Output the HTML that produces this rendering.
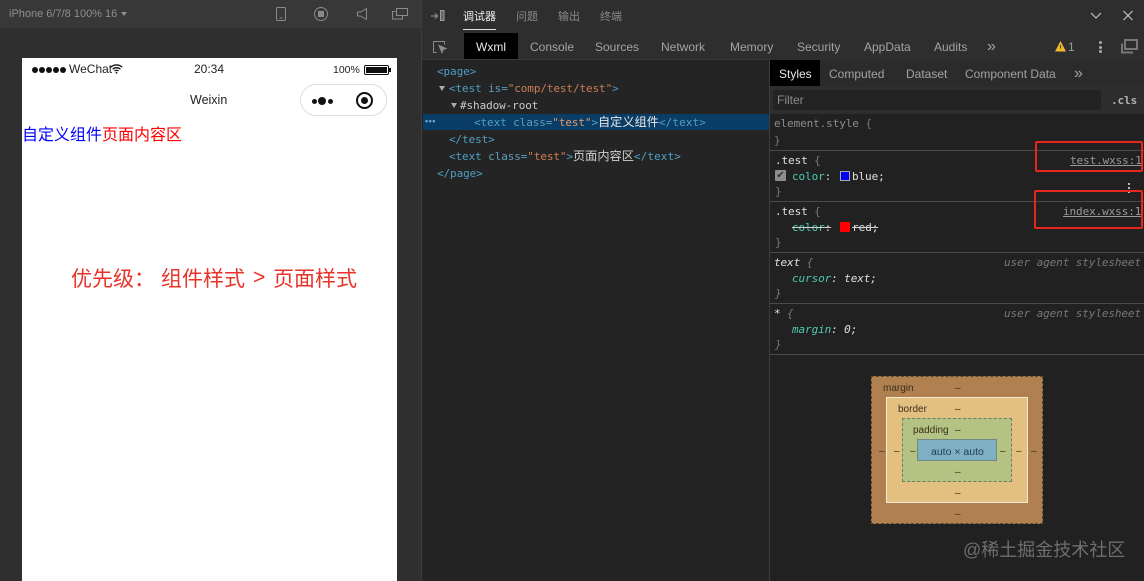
<!DOCTYPE html>
<html>
<head>
<meta charset="utf-8">
<style>
html,body{margin:0;padding:0;background:#212121}
#r{position:relative;width:1144px;height:581px;overflow:hidden;background:#212121;font-family:"Liberation Sans","Noto Sans CJK SC",sans-serif}
.a{position:absolute}
.t{position:absolute;white-space:pre;line-height:16px;font-size:12px;color:#a3a3a3}
.m{position:absolute;margin-top:1px;white-space:pre;line-height:16px;font-size:11px;letter-spacing:-.1px;font-family:"DejaVu Sans Mono","Liberation Mono","Noto Sans CJK SC",monospace;color:#d4d4d4}
.cj{font-family:"Noto Sans CJK SC",sans-serif;letter-spacing:0;font-size:12px}
.m .cj{font-size:12.2px}
.e{letter-spacing:.1px}
.b{color:#4f9fc4}.g{color:#5f9dbd}.o{color:#ce7d55}.ln{background:#4a4a4a;height:1px;left:770px;width:374px}
.c{color:#4ec9b0}.d{color:#777}
svg{position:absolute;overflow:visible}
.bx{position:absolute;margin-top:1px;font-size:10px;line-height:10px;color:#3b2f1c;white-space:pre}
.r{position:absolute;top:264px;font-size:21px;line-height:28px;white-space:pre;font-family:'Noto Sans CJK SC',sans-serif;color:#e8332a}
</style>
</head>
<body>
<div id="r">
<!-- left simulator -->
<div class="a" style="left:0;top:0;width:421px;height:581px;background:#2f2f2f"></div>
<div class="a" style="left:0;top:0;width:421px;height:28px;background:#383838"></div>
<div class="t" style="left:9px;top:6px;font-size:11px;color:#8f8f8f">iPhone 6/7/8 100% 16</div>
<div class="a" style="left:121px;top:12px;border:3px solid transparent;border-top:4px solid #8f8f8f"></div>
<svg style="left:270px;top:0" width="150" height="28" fill="none" stroke="#8a8a8a" stroke-width="1">
<rect x="6.500" y="7.500" width="9" height="13" rx="1"/><path d="M9.500 18h3"/>
<circle cx="51" cy="14" r="6.500"/><rect x="48" y="11" width="6" height="6" fill="#8a8a8a" stroke="none"/>
<path d="M96.500 8.500v11l-6-3.500h-3v-4h3z" stroke-linejoin="round"/>
<path d="M125.500 11.500h-3v7.500h10v-3"/><rect x="126.500" y="8.500" width="11" height="7" fill="#383838"/>
</svg>
<!-- phone -->
<div class="a" style="left:22px;top:58px;width:375px;height:523px;background:#fff"></div>
<div class="a" style="left:32px;top:64.500px;font-size:0">
<i class="a" style="left:0;top:2px;width:6px;height:6px;border-radius:50%;background:#111"></i>
<i class="a" style="left:7px;top:2px;width:6px;height:6px;border-radius:50%;background:#111"></i>
<i class="a" style="left:14px;top:2px;width:6px;height:6px;border-radius:50%;background:#111"></i>
<i class="a" style="left:21px;top:2px;width:6px;height:6px;border-radius:50%;background:#111"></i>
<i class="a" style="left:28px;top:2px;width:6px;height:6px;border-radius:50%;background:#111"></i>
</div>
<div class="t" style="left:69px;top:61px;color:#222;font-size:12px">WeChat</div>
<svg style="left:110px;top:64px" width="13" height="10" fill="none" stroke="#111" stroke-width="1.300"><path d="M.8 3.200C4 .2 9 .2 12.200 3.200M2.600 5.200c2.200-2 5.600-2 7.800 0M4.500 7c1.100-1 2.900-1 4 0"/><circle cx="6.500" cy="8.800" r=".9" fill="#111" stroke="none"/></svg>
<div class="t" style="left:194px;top:61px;color:#222;font-size:12px">20:34</div>
<div class="t" style="left:333px;top:62px;color:#222;font-size:10.500px">100%</div>
<div class="a" style="left:364px;top:65px;width:23px;height:8px;border:1px solid #111;border-radius:2px;box-sizing:content-box"></div>
<div class="a" style="left:366px;top:67px;width:21px;height:6px;background:#111"></div>
<div class="a" style="left:389px;top:68px;width:1.500px;height:4px;background:#111"></div>
<div class="t" style="left:190px;top:92px;color:#222;font-size:12.500px">Weixin</div>
<div class="a" style="left:300px;top:84px;width:87px;height:32px;box-sizing:border-box;border:1px solid #ddd;border-radius:16px;background:#fff"></div>
<i class="a" style="left:311.500px;top:98.500px;width:5px;height:5px;border-radius:50%;background:#111"></i>
<i class="a" style="left:318px;top:97px;width:8px;height:8px;border-radius:50%;background:#111"></i>
<i class="a" style="left:327.500px;top:98.500px;width:5px;height:5px;border-radius:50%;background:#111"></i>
<div class="a" style="left:356px;top:92px;width:17px;height:17px;box-sizing:border-box;border:2.500px solid #111;border-radius:50%"></div>
<i class="a" style="left:361px;top:97px;width:7px;height:7px;border-radius:50%;background:#111"></i>
<div class="a" style="left:22px;top:124px;font-size:16px;line-height:18px;white-space:pre;font-family:'Noto Sans CJK SC',sans-serif;color:#0000ff">自定义组件<span style="color:#ff0000">页面内容区</span></div>
<div class="r" style="left:71px">优先级：</div>
<div class="r" style="left:161px">组件样式</div>
<div class="r" style="left:253px;font-family:'Liberation Sans',sans-serif">&gt;</div>
<div class="r" style="left:273px">页面样式</div>

<!-- divider -->
<div class="a" style="left:421px;top:0;width:1px;height:581px;background:#3d3d3d"></div>
<!-- top bar of devtools -->
<div class="a" style="left:422px;top:0;width:722px;height:60px;background:#2e2e2e"></div>
<div class="a" style="left:422px;top:59px;width:348px;height:1px;background:#3a3a3a"></div>
<svg style="left:430px;top:9px" width="16" height="14" fill="none" stroke="#9a9a9a" stroke-width="1"><path d="M1 7h6M5 4.500l2.500 2.500-2.500 2.500"/><rect x="10.500" y="1.500" width="3.500" height="10" fill="#666"/></svg>
<div class="t cj" style="left:463px;top:8px;font-size:11px;color:#f0f0f0">调试器</div>
<div class="a" style="left:463px;top:29px;width:33px;height:1px;background:#e0e0e0"></div>
<div class="t cj" style="left:516px;top:8px;font-size:11px;color:#8a8a8a">问题</div>
<div class="t cj" style="left:558px;top:8px;font-size:11px;color:#8a8a8a">输出</div>
<div class="t cj" style="left:600px;top:8px;font-size:11px;color:#8a8a8a">终端</div>
<svg style="left:1090px;top:9px" width="45" height="14" fill="none" stroke="#c8c8c8" stroke-width="1.100"><path d="M1 4l5 5 5-5"/><path d="M33.500 2l9 9M42.500 2l-9 9"/></svg>
<!-- tabs -->
<svg style="left:432px;top:40px" width="16" height="14" fill="none" stroke="#8c8c8c" stroke-width="1"><path d="M4.500 12.500h-3v-11h11v3"/><path d="M7 5.500l7 3-3 1.200-1 3z" fill="#8c8c8c"/></svg>
<div class="a" style="left:464px;top:33px;width:54px;height:26px;background:#000"></div>
<div class="t" style="left:476px;top:39px;color:#e8e8e8">Wxml</div>
<div class="t" style="left:530px;top:39px">Console</div>
<div class="t" style="left:595px;top:39px">Sources</div>
<div class="t" style="left:661px;top:39px">Network</div>
<div class="t" style="left:730px;top:39px">Memory</div>
<div class="t" style="left:797px;top:39px">Security</div>
<div class="t" style="left:864px;top:39px">AppData</div>
<div class="t" style="left:934px;top:39px">Audits</div>
<div class="t" style="left:987px;top:39px;font-size:16px">»</div>
<svg style="left:1055px;top:41px" width="11" height="11"><path d="M5.500 0L11 10.500H0z" fill="#f0b92d"/><rect x="5" y="4" width="1" height="3.500" fill="#333"/></svg>
<div class="t" style="left:1068px;top:39px;color:#9a9a9a">1</div>
<i class="a" style="left:1099px;top:41px;width:3px;height:3px;border-radius:50%;background:#aaa"></i>
<i class="a" style="left:1099px;top:45.500px;width:3px;height:3px;border-radius:50%;background:#aaa"></i>
<i class="a" style="left:1099px;top:50px;width:3px;height:3px;border-radius:50%;background:#aaa"></i>
<svg style="left:1120px;top:39px" width="18" height="15" fill="none" stroke="#777" stroke-width="2"><rect x="5" y="1" width="12" height="9"/><path d="M2 4.500v9h11"/></svg>

<!-- wxml tree -->
<div class="a" style="left:422px;top:60px;width:348px;height:521px;background:#242424"></div>
<div class="a" style="left:769px;top:60px;width:1px;height:521px;background:#3c3c3c"></div>
<div class="a" style="left:423px;top:114px;width:346px;height:16px;background:#0a3d66"></div>
<div class="m" style="left:437px;top:63px"><span class="b">&lt;page&gt;</span></div>
<div class="a" style="left:439px;top:86px;border:3.500px solid transparent;border-top:5px solid #aaa;border-bottom:0"></div>
<div class="m" style="left:449px;top:80px"><span class="b">&lt;test</span> <span class="g">is=</span><span class="o">"comp/test/test"</span><span class="b">&gt;</span></div>
<div class="a" style="left:451px;top:103px;border:3.500px solid transparent;border-top:5px solid #aaa;border-bottom:0"></div>
<div class="m" style="left:460px;top:97px;color:#c8c8c8">#shadow-root</div>
<div class="t" style="left:425px;top:113px;font-size:9px;color:#6aa6d6;letter-spacing:.5px;font-weight:bold">•••</div>
<div class="m" style="left:474px;top:112px"><span class="b">&lt;text</span> <span class="g">class=</span><span style="color:#e39a6c">"test"</span><span class="b">&gt;</span><span class="cj" style="color:#e8e8e8">自定义组件</span><span class="b e">&lt;/text&gt;</span></div>
<div class="m" style="left:449px;top:131px"><span class="b">&lt;/test&gt;</span></div>
<div class="m" style="left:449px;top:146px"><span class="b">&lt;text</span> <span class="g">class=</span><span class="o">"test"</span><span class="b">&gt;</span><span class="cj" style="color:#d0d0d0">页面内容区</span><span class="b e">&lt;/text&gt;</span></div>
<div class="m" style="left:437px;top:165px"><span class="b">&lt;/page&gt;</span></div>

<!-- styles panel header -->
<div class="a" style="left:770px;top:60px;width:374px;height:26px;background:#2b2b2b"></div>
<div class="a" style="left:770px;top:60px;width:50px;height:26px;background:#000"></div>
<div class="t" style="left:779px;top:66px;color:#e8e8e8">Styles</div>
<div class="t" style="left:829px;top:66px">Computed</div>
<div class="t" style="left:906px;top:66px">Dataset</div>
<div class="t" style="left:965px;top:66px">Component Data</div>
<div class="t" style="left:1074px;top:66px;font-size:16px">»</div>
<div class="a" style="left:770px;top:86px;width:374px;height:28px;background:#2d2d2d"></div>
<div class="a" style="left:773px;top:90px;width:328px;height:20px;background:#232323"></div>
<div class="t" style="left:777px;top:92px;color:#8a8a8a">Filter</div>
<div class="m" style="left:1111px;top:92px;color:#b0b0b0;font-weight:bold">.cls</div>

<!-- rules -->
<div class="m" style="left:774px;top:115px;color:#8c8c8c">element.style <span class="d">{</span></div>
<div class="m d" style="left:774px;top:132px">}</div>
<div class="a ln" style="top:150px"></div>
<div class="m" style="left:775px;top:152px;color:#e0e0e0">.test <span class="d">{</span></div>
<div class="m" style="left:1070px;top:152px;color:#999;text-decoration:underline">test.wxss:1</div>
<div class="a" style="left:775px;top:170px;width:11px;height:11px;background:#8d8d8d;border-radius:1px;color:#333;font-size:10px;line-height:11px;text-align:center">✔</div>
<div class="m" style="left:792px;top:168px"><span class="c">color</span>:</div>
<div class="a" style="left:840px;top:171px;width:8px;height:8px;background:#0000ff;border:1px solid #aaa"></div>
<div class="m" style="left:852px;top:168px;color:#e0e0e0">blue;</div>
<div class="m d" style="left:775px;top:183px">}</div>
<i class="a" style="left:1128px;top:183px;width:2px;height:2px;background:#bbb"></i>
<i class="a" style="left:1128px;top:187px;width:2px;height:2px;background:#bbb"></i>
<i class="a" style="left:1128px;top:191px;width:2px;height:2px;background:#bbb"></i>
<div class="a ln" style="top:201px"></div>
<div class="m" style="left:775px;top:203px;color:#e0e0e0">.test <span class="d">{</span></div>
<div class="m" style="left:1063px;top:203px;color:#999;text-decoration:underline">index.wxss:1</div>
<div class="m" style="left:792px;top:219px;text-decoration:line-through"><span class="c">color</span>:<span style="display:inline-block;width:14px"> </span><span style="display:inline-block;width:7px"> </span><span style="color:#ddd">red;</span></div>
<div class="a" style="left:840px;top:222px;width:10px;height:10px;background:#ff0000"></div>
<div class="m d" style="left:775px;top:234px">}</div>
<div class="a ln" style="top:252px"></div>
<div class="m" style="left:774px;top:254px;color:#e0e0e0;font-style:italic">text <span class="d">{</span></div>
<div class="m d" style="left:1004px;top:254px;font-style:italic">user agent stylesheet</div>
<div class="m" style="left:792px;top:270px;font-style:italic;color:#e0e0e0"><span class="c">cursor</span>: text;</div>
<div class="m d" style="left:775px;top:285px;font-style:italic">}</div>
<div class="a ln" style="top:303px"></div>
<div class="m" style="left:774px;top:305px;color:#e0e0e0;font-style:italic">* <span class="d">{</span></div>
<div class="m d" style="left:1004px;top:305px;font-style:italic">user agent stylesheet</div>
<div class="m" style="left:792px;top:321px;font-style:italic;color:#e0e0e0"><span class="c">margin</span>: 0;</div>
<div class="m d" style="left:775px;top:336px;font-style:italic">}</div>
<div class="a ln" style="top:354px"></div>

<!-- red annotation boxes -->
<div class="a" style="left:1035px;top:141px;width:108px;height:31px;box-sizing:border-box;border:2px solid #e5271c;border-radius:2px"></div>
<div class="a" style="left:1034px;top:190px;width:109px;height:39px;box-sizing:border-box;border:2px solid #e5271c;border-radius:2px"></div>

<!-- box model -->
<div class="a" style="left:871px;top:376px;width:172px;height:148px;box-sizing:border-box;background:#b08050;border:1px dashed #5e4a30"></div>
<div class="a" style="left:886px;top:397px;width:142px;height:106px;box-sizing:border-box;background:#e3c07f;border:1px solid #f3ead5"></div>
<div class="a" style="left:902px;top:418px;width:110px;height:64px;box-sizing:border-box;background:#b4c283;border:1px dashed #6e7f5c"></div>
<div class="a" style="left:917px;top:439px;width:80px;height:22px;box-sizing:border-box;background:#7fafc3;border:1px solid #6f8a80"></div>
<div class="bx" style="left:883px;top:383px">margin</div>
<div class="bx" style="left:898px;top:404px">border</div>
<div class="bx" style="left:913px;top:425px">padding</div>
<div class="bx" style="left:931px;top:446px;color:#23404f;font-size:10.500px">auto × auto</div>
<div class="bx" style="left:955px;top:383px">–</div>
<div class="bx" style="left:955px;top:404px">–</div>
<div class="bx" style="left:955px;top:425px">–</div>
<div class="bx" style="left:955px;top:467px">–</div>
<div class="bx" style="left:955px;top:488px">–</div>
<div class="bx" style="left:955px;top:509px">–</div>
<div class="bx" style="left:879px;top:446px">–</div>
<div class="bx" style="left:894px;top:446px">–</div>
<div class="bx" style="left:910px;top:446px">–</div>
<div class="bx" style="left:1000px;top:446px">–</div>
<div class="bx" style="left:1016px;top:446px">–</div>
<div class="bx" style="left:1031px;top:446px">–</div>

<!-- watermark -->
<div class="a" style="left:963px;top:538px;font-size:18px;line-height:24px;white-space:pre;font-family:'Liberation Sans','Noto Sans CJK SC',sans-serif;color:#6e6e6e">@稀土掘金技术社区</div>
</div>
</body>
</html>
